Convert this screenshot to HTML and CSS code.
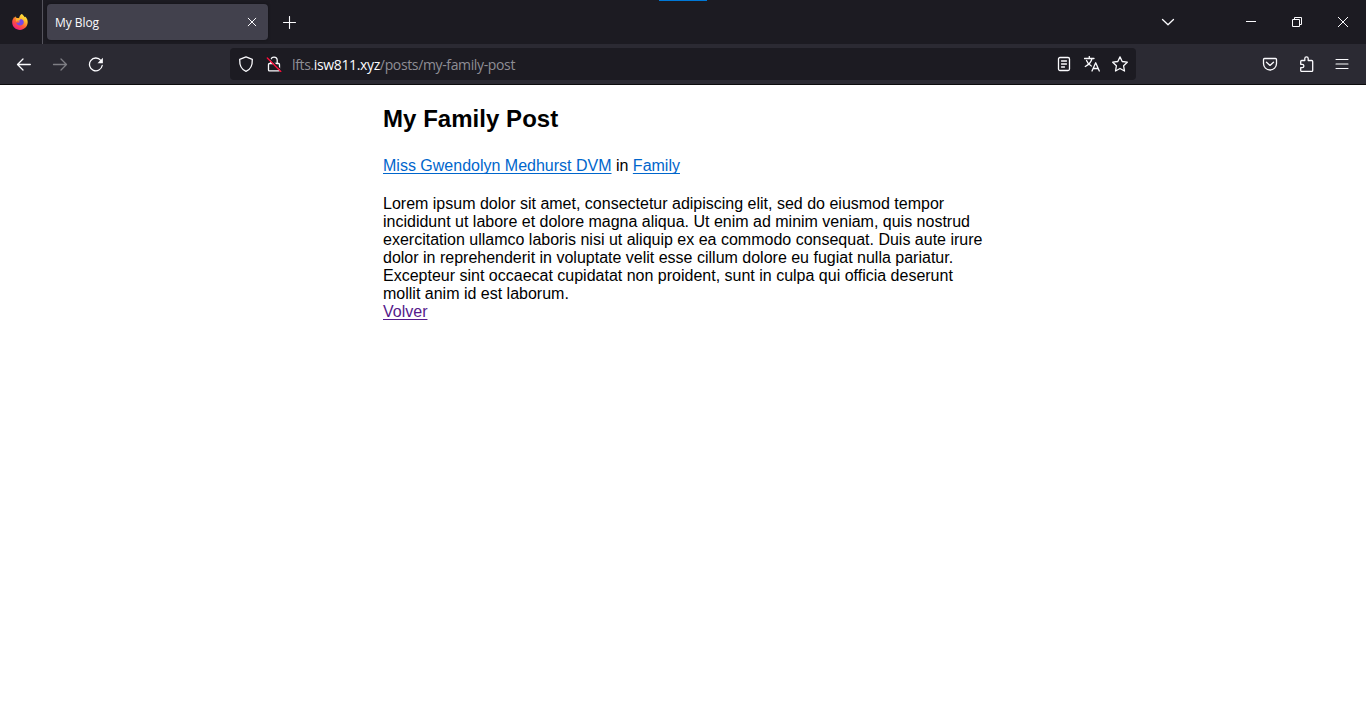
FILE: index.html
```html
<!DOCTYPE html>
<html lang="en">
<head>
<meta charset="utf-8">
<title>My Blog</title>
<link rel="stylesheet" href="styles.css">
</head>
<body>
<header class="browser">
  <div class="tabbar">
    <span class="notch"></span>
    <div class="pinned">
      <svg class="icon" viewBox="0 0 16 16">
        <defs>
          <linearGradient id="flame" x1="0.85" y1="0.05" x2="0.25" y2="1">
            <stop offset="0" stop-color="#fff044"/><stop offset=".3" stop-color="#ffbd2e"/><stop offset=".62" stop-color="#ff5a36"/><stop offset="1" stop-color="#f0148a"/>
          </linearGradient>
        </defs>
        <path fill="url(#flame)" d="M9.6 0C11 .6 12 2 12.6 3.3 13 3 13 2.700 13 2.500 15 4.200 15.900 6.300 15.700 8.600 15.400 12.800 12.200 15.900 8 15.900 3.700 15.900.300 12.600.200 8.500.100 6.400.900 4.800 1.700 3.900L2 2.700 2.800 3.700 3.800 2.300 4.500 4 7 4.300C7.400 2.500 8.300 1 9.600 0Z"/>
        <path fill="#7548e8" d="M5.200 6.300C6.300 5 8 4.900 9 5.100 11 5.600 12.200 7.200 11.700 9 11.200 10.800 9.600 11.500 8 11.400 5.800 11.300 4.400 9.900 4.300 8.200 5.400 8.900 6.600 8.900 7.500 8.200L7.700 7.300 5.800 7Z"/>
        <path fill="#ffb52c" d="M4 4 7 4.300 8.500 5.200 7.300 6.800 5.300 6.800 4.300 8Z"/>
      </svg>
    </div>
    <div class="tab"><span class="tab-title">My Blog</span>
      <svg class="tab-close" viewBox="0 0 10 10"><path d="M1.200 1.200 8.800 8.800M8.800 1.200 1.200 8.800"/></svg>
    </div>
    <svg class="plus" viewBox="0 0 13 13"><path d="M6.500.500V12.500M.500 6.500H12.500"/></svg>
    <div class="window-tools">
      <svg class="list-tabs" viewBox="0 0 14 14"><path d="M1.500 4.500 7 9.800 12.500 4.500"/></svg>
      <svg class="win" viewBox="0 0 10 10"><path d="M0 4.500H10"/></svg>
      <svg class="win" viewBox="0 0 10 10"><path d="M.500 2.500H7.500V9.500H.500ZM2.500 2.500V.500H9.500V7.500H7.500"/></svg>
      <svg class="win close" viewBox="0 0 10 10"><path d="M0 0 10 10M10 0 0 10"/></svg>
    </div>
  </div>
  <div class="toolbar">
    <nav class="history">
      <svg class="icon" viewBox="0 0 16 16"><path d="M14.300 8.500H1.500M7 3 1.500 8.500 7 14"/></svg>
      <svg class="icon off" viewBox="0 0 16 16"><path d="M1.500 8.500H14.500M9 3 14.500 8.500 9 14"/></svg>
      <svg class="icon" viewBox="0 0 16 16"><path d="M12.800 4.300A6.400 6.400 0 1 0 14.200 9.500"/><path class="solid" d="M14.900 1.800V7.200H9.500Z"/></svg>
    </nav>
    <div class="urlbar">
      <svg class="icon" viewBox="0 0 16 16"><path d="M8 .900 14.300 3.400C14.500 8.500 13.200 13.400 8 15.300 2.800 13.400 1.500 8.500 1.700 3.400Z"/></svg>
      <svg class="icon lock" viewBox="0 0 16 16"><path d="M4.800 7.500V4.300A3.200 3.200 0 0 1 11.200 4.300V7.500M3.500 7.500H12.500Q13.500 7.500 13.500 8.500V13.900Q13.500 14.900 12.500 14.900H3.500Q2.500 14.900 2.500 13.900V8.500Q2.500 7.500 3.500 7.500Z"/><path class="gap" d="M2.300 1.200 15.600 14.500"/><path class="strike" d="M1.300 2 14.800 15.500"/></svg>
      <div class="url">lfts.<b>isw811.xyz</b>/posts/my-family-post</div>
      <div class="url-actions">
        <svg class="icon" viewBox="0 0 16 16"><rect x="2.500" y="1.500" width="11" height="13" rx="1.500"/><path d="M5.500 5H10.500M5.500 8H10.500M5.500 11H8.500"/></svg>
        <svg class="icon" viewBox="0 0 16 16"><path d="M.500 2.500H10M5.300 .500V2.500M8 2.500C7.200 6 4.500 8.800 1.300 10.500M2.500 4.500C3.600 7.300 5 8.900 7.300 10M8 15 11.700 6.800 15.300 15M9.200 12.500H14.200"/></svg>
        <svg class="icon" viewBox="0 0 16 16"><path d="M8 .900 10.200 5.500 15.300 6.200 11.600 9.800 12.500 15 8 12.500 3.500 15 4.400 9.800.700 6.200 5.800 5.500Z"/></svg>
      </div>
    </div>
    <div class="extras">
      <svg class="icon" viewBox="0 0 16 16"><path d="M2.500 2.500H13.500Q14.500 2.500 14.500 3.500V7.500A6.500 6.500 0 0 1 1.500 7.500V3.500Q1.500 2.500 2.500 2.500ZM4.500 6.200 8 9.400 11.500 6.200"/></svg>
      <svg class="icon" viewBox="0 0 16 16"><path d="M6.800 4.500V2.500A1.700 1.700 0 0 1 10.200 2.500V4.500H13.700Q14.700 4.500 14.700 5.500V14.400Q14.700 15.400 13.700 15.400H3.700Q2.700 15.400 2.700 14.400V11.700H4.200A1.700 1.700 0 0 0 4.200 8.300H2.700V5.500Q2.700 4.500 3.700 4.500Z"/></svg>
      <svg class="icon menu" viewBox="0 0 16 16"><path d="M2 3.500H14M2 8H14M2 12.500H14"/></svg>
    </div>
  </div>
</header>
<main class="post">
  <h1 class="post-title">My Family Post</h1>
  <p class="byline"><a href="#">Miss Gwendolyn Medhurst DVM</a> in <a href="#">Family</a></p>
  <div class="post-body">Lorem ipsum dolor sit amet, consectetur adipiscing elit, sed do eiusmod tempor incididunt ut labore et dolore magna aliqua. Ut enim ad minim veniam, quis nostrud exercitation ullamco laboris nisi ut aliquip ex ea commodo consequat. Duis aute irure dolor in reprehenderit in voluptate velit esse cillum dolore eu fugiat nulla pariatur. Excepteur sint occaecat cupidatat non proident, sunt in culpa qui officia deserunt mollit anim id est laborum.</div>
  <a class="back" href="#">Volver</a>
</main>
</body>
</html>
```
FILE: styles.css
```css
* { box-sizing: border-box; }
body { margin: 0; background: #fff; color: #000; font: 16px/18px "Liberation Sans", Arial, sans-serif; }
svg { display: block; flex: none; fill: none; stroke: #fbfbfe; stroke-width: 1.3; stroke-linejoin: round; stroke-linecap: round; }
.icon { width: 16px; height: 16px; }
.browser { font-family: "Open Sans", "Noto Sans", sans-serif; color: #fbfbfe; border-bottom: 1px solid #0c0c0d; }
.tabbar { position: relative; display: flex; align-items: center; height: 44px; background: #1c1b22; }
.notch { position: absolute; top: 0; left: 659px; width: 48px; height: 1px; background: #0078d7; }
.pinned { display: flex; align-items: center; width: 43px; height: 44px; padding-left: 12px; border-right: 1px solid #55545d; }
.pinned svg { stroke: none; }
.tab { display: flex; align-items: center; justify-content: space-between; width: 221px; height: 36px; margin-left: 4px; padding: 0 11px 0 8px; border-radius: 4px; background: #42414d; box-shadow: 0 0 3px rgba(0, 0, 0, .4); }
.tab-title { padding-top: 2px; font-size: 12px; line-height: 18px; letter-spacing: -.05px; }
.tab-close { width: 10px; height: 10px; stroke-width: 1; }
.plus { width: 13px; height: 13px; margin-left: 15px; stroke-width: 1.1; }
.window-tools { display: flex; align-items: center; margin-left: auto; padding-right: 18px; gap: 36px; }
.list-tabs { width: 14px; height: 14px; margin-right: 35px; }
.win { width: 10px; height: 10px; stroke-width: 1; stroke-linecap: butt; stroke-linejoin: miter; }
.toolbar { display: flex; align-items: center; height: 40px; background: #2b2a33; }
.history { display: flex; gap: 20px; width: 230px; padding-left: 16px; }
.off { opacity: .4; }
.solid { fill: #fbfbfe; stroke: none; }
.urlbar { display: flex; align-items: center; width: 906px; height: 32px; padding: 0 8px; border-radius: 4px; background: #1c1b22; }
.lock { margin-left: 12px; }
.gap { stroke: #1c1b22; }
.strike { stroke: #ff0f3c; }
.url { margin-left: 10px; padding-top: 2px; font-size: 14px; line-height: 20px; letter-spacing: -.36px; color: #8f8e95; white-space: nowrap; }
.url b { font-weight: 400; color: #fbfbfe; }
.url-actions { display: flex; gap: 12px; margin-left: auto; }
.extras { display: flex; gap: 20px; margin-left: auto; padding-right: 16px; }
.menu { stroke-width: 1.1; }
.post { width: 600px; margin: 0 auto; padding-top: 20px; }
.post-title { margin: 0; font-size: 24px; line-height: 28px; letter-spacing: .04px; }
.byline { margin: 24px 0 20px; }
a { color: #0066cc; text-decoration: underline; text-underline-offset: 2px; text-decoration-thickness: 1px; text-decoration-skip-ink: none; }
.back { color: #551a8b; }
```
